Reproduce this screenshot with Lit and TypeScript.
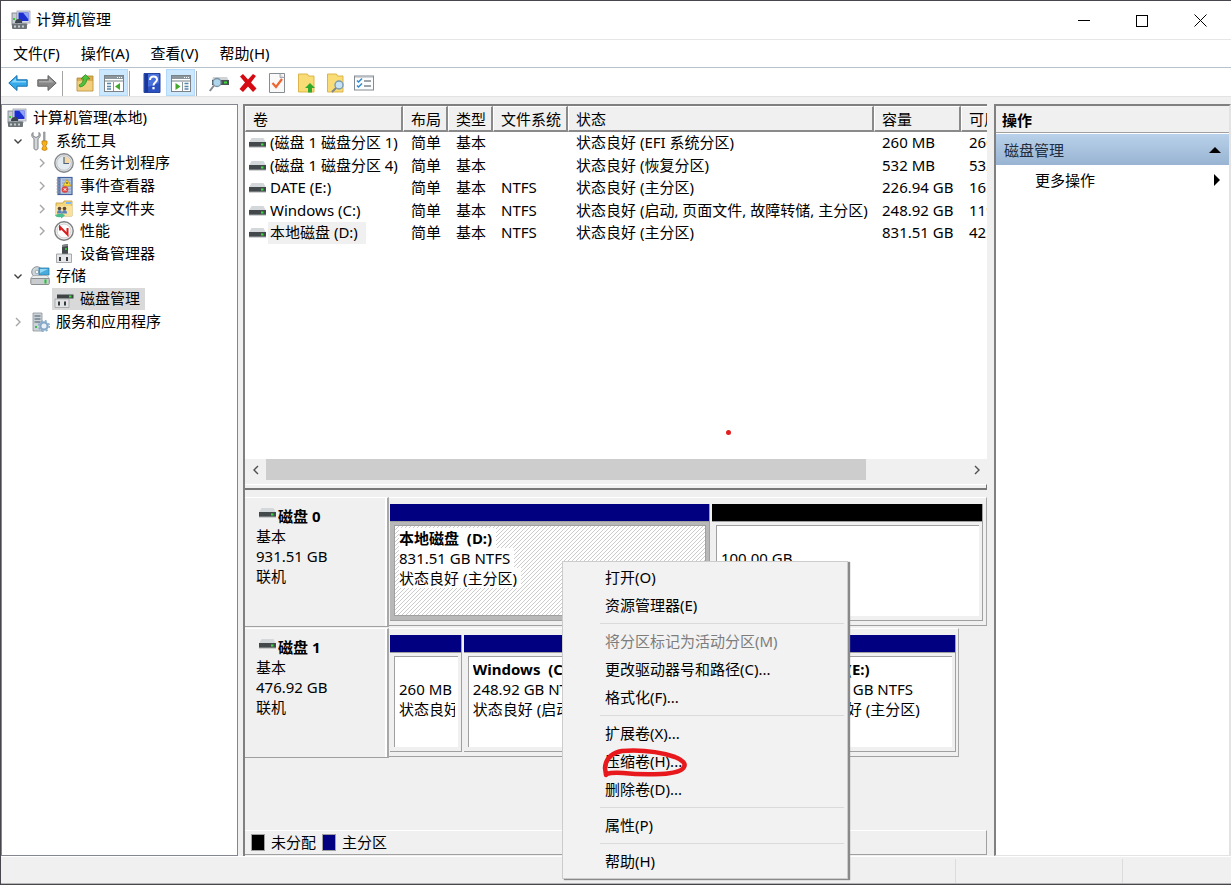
import { LitElement, html, css, svg, nothing, TemplateResult } from "lit";
import { customElement } from "lit/decorators.js";
import { classMap } from "lit/directives/class-map.js";
import { styleMap } from "lit/directives/style-map.js";

type Glyph = ReturnType<typeof svg>;

const computer = svg`
  <rect x="1" y="3" width="5" height="12" fill="#c9ccd2" stroke="#777c85" stroke-width=".8"/>
  <rect x="2" y="8" width="2" height="2" fill="#3ecb3a"/>
  <rect x="6" y="1" width="13" height="12" fill="#d8dce6" stroke="#a0a5b0" stroke-width=".8"/>
  <rect x="7.500" y="2.500" width="10" height="8.500" fill="#1b2fd0"/>
  <path d="M12 2.500h5.500v7z" fill="#8fa4f5"/>
  <path d="M4 13q0-4 4-4t3 4z" fill="#3c4450"/>
  <path d="M10 13h6l1 2h-7z" fill="#b9bcc4"/>
  <rect x="1" y="13.500" width="15" height="5.500" rx="1" fill="#6d7478"/>
  <path d="M3 15.500h2v2H3zM7 15.500h2v2H7zM11 15.500h2v2h-2z" fill="#c4ccd0"/>`;

const icons: Record<string, Glyph> = {
  computer,
  tools: svg`
    <path d="M3 1.500C1 3 1.500 6.500 4 7.500V17c0 2.500 4 2.500 4 0V7.500C10.500 6.500 11 3 9 1.500V5L6 6.500 3 5z" fill="#d4d7da" stroke="#7c8084" stroke-width="1"/>
    <path d="M13.500 1h1.600v9h-1.600z" fill="#a5a9ad" stroke="#777" stroke-width=".5"/>
    <path d="M12 10h5v3l-1 1v2l1 1v1.500q-2.500 2-5 0V17l1-1v-2l-1-1z" fill="#f5b21c" stroke="#c37f07" stroke-width=".8"/>`,
  clock: svg`
    <circle cx="10" cy="10" r="9.200" fill="#e9ebed" stroke="#85898c" stroke-width="1.400"/>
    <circle cx="10" cy="10" r="7.300" fill="#e4ebf1" stroke="#b4b7ba" stroke-width=".8"/>
    <path d="M10 10V3.500a6.500 6.500 0 0 1 6.500 6.500z" fill="#f4d9a4"/>
    <path d="M10 4v6.500h5" fill="none" stroke="#4e6384" stroke-width="1.200"/>`,
  events: svg`
    <rect x="4" y="1.500" width="14" height="17" fill="#b9c8e4" stroke="#42619d" stroke-width="1.200"/>
    <path d="M8 4h9M8 7h9M8 10h9M8 13h9M8 16h9" stroke="#7a92c2" stroke-width=".8"/>
    <path d="M5.500 2v16" stroke="#5b74a8" stroke-width="2"/>
    <path d="M2.500 4h4M2.500 7h4M2.500 10h4M2.500 13h4M2.500 16h4" stroke="#8a9099" stroke-width="1"/>
    <path d="M13 3.500l4 6.500H9z" fill="#f8d937" stroke="#b8930a" stroke-width=".7"/>
    <path d="M13 6v2" stroke="#333" stroke-width="1"/>
    <circle cx="11" cy="13.500" r="3.300" fill="#dc4541"/><path d="M9.700 12.200l2.600 2.600m0-2.600l-2.600 2.600" stroke="#fff"/>`,
  shared: svg`
    <path d="M2 4h7l1-2h8v15H2z" fill="#f4d77c" stroke="#c79b35" stroke-width=".8"/>
    <path d="M12 3h5v2h-5z" fill="#7fb8ea"/>
    <path d="M2 7h16v10H2z" fill="#f8e19a"/>
    <circle cx="5.500" cy="9.500" r="1.800" fill="#5d4632"/><circle cx="10.500" cy="9.500" r="1.800" fill="#5d4632"/>
    <path d="M3 14.500q0-3.500 2.500-3.500T8 14.500zM8 14.500q0-3.500 2.500-3.500t2.500 3.500z" fill="#5a82bd"/>
    <path d="M1 16.500q3-2.500 6-1.500v-1.500l4 3-4 3V18q-4 1-6-1.500z" fill="#49bf90"/>`,
  perf: svg`
    <circle cx="10" cy="10" r="9.200" fill="#f4f4f4" stroke="#7d7f81" stroke-width="1.400"/>
    <circle cx="10" cy="10" r="7" fill="#fff" stroke="#c3c3c3" stroke-width=".8"/>
    <path d="M6 9.500V6l7.500 7.500V7" fill="none" stroke="#d91f1f" stroke-width="2"/>`,
  devices: svg`
    <path d="M8 1l6-1v10H8z" fill="#454b4d"/><path d="M8 1l6-1v2l-6 1z" fill="#838a8c"/>
    <path d="M12 4v2" stroke="#30df37" stroke-width="1.500"/>
    <path d="M2.500 10h15v8.500h-15z" fill="#e4e6e8" stroke="#92969a" stroke-width=".8"/>
    <path d="M5 13h2v4H5zM12 13h2v4h-2z" fill="#363a3c"/>`,
  storage: svg`
    <circle cx="7" cy="6" r="5.300" fill="#ccd5d9" stroke="#8b959b"/><circle cx="7" cy="6" r="1.800" fill="#f2f5f6" stroke="#8b959b" stroke-width=".7"/>
    <path d="M9 2h10v7H9z" fill="#49abdc" stroke="#2a7dac" stroke-width=".8"/><path d="M10 3h8l-8 4z" fill="#95d8f5"/>
    <path d="M3 9.500h14l2.500 3H.500z" fill="#e9ebec" stroke="#9ba0a2" stroke-width=".7"/>
    <rect x=".800" y="12.500" width="18.500" height="6" rx="1" fill="#c9ccce" stroke="#898e90"/>
    <rect x="14.500" y="13.500" width="2" height="4" fill="#1fc32f"/>`,
  diskmgmt: svg`
    <path d="M6 2.500h11l2.500 3H3.500z" fill="#d6d9dc"/><path d="M3 5.500h16.500v4H3z" fill="#3e4345"/>
    <rect x="15" y="6.500" width="2.500" height="2" fill="#39df39"/>
    <path d="M1 10h14v8.500H1z" fill="#e2e3e5" stroke="#95989b" stroke-width=".7"/>
    <path d="M4 12.500h2v4H4zM10 12.500h2v4h-2z" fill="#35393b"/>`,
  services: svg`
    <path d="M3 1h9v18H3z" fill="#cbd2d8" stroke="#8a949c" stroke-width=".8"/>
    <path d="M4.500 4h6M4.500 7h6M4.500 10h6" stroke="#73818d" stroke-width="1.300"/>
    <rect x="5" y="14" width="2" height="2" fill="#3fba4b"/>
    <circle cx="14" cy="14" r="3.600" fill="#e9f0f6" stroke="#84a9c9" stroke-width="2.200"/>
    <circle cx="14" cy="14" r="5.300" fill="none" stroke="#84a9c9" stroke-width="1.400" stroke-dasharray="2.100 2.100"/>`,
  back: svg`<path d="M.800 10L9 2.500v4.300h10.200v6.400H9v4.300z" fill="#35a9ea" stroke="#1b70aa" stroke-width="1"/><path d="M3 9.500l5-4.500v3h10v1.500z" fill="#87d3fa"/>`,
  forward: svg`<path d="M19.200 10L11 2.500v4.300H.800v6.400H11v4.300z" fill="#878787" stroke="#646464" stroke-width="1"/><path d="M17 9.500L12 5v3H2v1.500z" fill="#ababab"/>`,
  up: svg`
    <path d="M2 5h5l1.500-2H18v15H2z" fill="#dcae51" stroke="#b08530" stroke-width=".8"/><path d="M2.500 8h15v9.500h-15z" fill="#f1cf7e"/>
    <path d="M4 12q4-1 4.500-6H6l4.500-4.500L15 6h-3Q11 13 5 14z" fill="#4dc33d" stroke="#25881f" stroke-width=".7"/>`,
  tree: svg`
    <rect x=".500" y="2.500" width="19" height="16" fill="#fff" stroke="#7b8389"/><path d="M1 3h18v3H1z" fill="#8c969d"/>
    <path d="M13 4.500h1M15 4.500h1M17 4.500h1" stroke="#fff"/><path d="M1 8h18" stroke="#a2abb1" stroke-width="1.500"/>
    <path d="M9.500 9v9" stroke="#8c969d"/><path d="M3 10.500h4M3 13.500h4M3 16h4" stroke="#5585a9" stroke-width="1.300"/>
    <path d="M16 10v7l-5-3.500z" fill="#41a92c"/>`,
  pane: svg`
    <rect x=".500" y="2.500" width="19" height="16" fill="#fff" stroke="#7b8389"/><path d="M1 3h18v3H1z" fill="#8c969d"/>
    <path d="M13 4.500h1M15 4.500h1M17 4.500h1" stroke="#fff"/><path d="M1 8h18" stroke="#a2abb1" stroke-width="1.500"/>
    <path d="M11.500 9v9" stroke="#8c969d"/><path d="M13.500 10.500h4M13.500 13.500h4M13.500 16h4" stroke="#5585a9" stroke-width="1.300"/>
    <path d="M4.500 10v7l5-3.500z" fill="#41a92c"/>`,
  help: svg`
    <path d="M2 .500h16v19H2z" fill="#2b50c0" stroke="#27459c"/><path d="M3 1h3v18H3z" fill="#1a3796"/><path d="M6 1h11v9L6 14z" fill="#4a70dc"/>
    <path d="M8 7q0-3.500 3.500-3.500T15 6.500c0 3-3.500 2.500-3.500 6" fill="none" stroke="#fff" stroke-width="2"/><rect x="10.400" y="14" width="2.200" height="2.300" fill="#fff"/>`,
  scan: svg`
    <path d="M4 4h14l1.500 3H3z" fill="#cfd3d6"/><path d="M3 7h17v5H3z" fill="#4c5255"/><rect x="15" y="8.500" width="3" height="2" fill="#3bdc3b"/>
    <circle cx="8" cy="9.500" r="4" fill="#aed7ee" stroke="#7d93a3" stroke-width="1.300"/><path d="M5 12.500L.800 18" stroke="#858b90" stroke-width="2"/>`,
  remove: svg`<path d="M2 3.500L5 1l5 5.500L15 1l3 2-5 6.500 5.500 6L15 19l-5-5.500L5 19l-3.500-3L7 9.500z" fill="#d60a12"/>`,
  check: svg`
    <path d="M2.500.500h15v19h-15z" fill="#f9f9fa" stroke="#888d92"/><path d="M13 .500v4h4.500" fill="#ddd" stroke="#888d92" stroke-width=".7"/>
    <path d="M5.500 10l3.500 4 6-8" fill="none" stroke="#ee6530" stroke-width="2.200"/>`,
  folderup: svg`
    <path d="M2.500 1h9l1 2H18v16H2.500z" fill="#f9dc76" stroke="#d7af3e" stroke-width=".9"/>
    <path d="M14 10l5 5h-3v4.500h-4V15H9z" fill="#2faa2d"/>`,
  folderfind: svg`
    <path d="M2.500 1h9l1 2H18v16H2.500z" fill="#f9dc76" stroke="#d7af3e" stroke-width=".9"/>
    <circle cx="14" cy="12" r="4" fill="#c8e4f4" stroke="#7b9bb1" stroke-width="1.400"/><path d="M11 15l-4 4" stroke="#80868b" stroke-width="2"/>`,
  list: svg`
    <rect x=".500" y="3" width="19" height="14" fill="#fbfcfd" stroke="#858b91"/><path d="M1 4h18" stroke="#a9b0b6"/>
    <path d="M3 7.500l1.500 1.500L8 5.500M3 12.500L4.500 14 8 10.500" fill="none" stroke="#2e8ad3" stroke-width="1.500"/>
    <path d="M10 8h7M10 13h7" stroke="#7d868d" stroke-width="1.400"/>`,
};

const icon = (name: string) => html`<svg class="icon" viewBox="0 0 20 20" aria-hidden="true">${icons[name]}</svg>`;

const drive = html`<svg class="drive" viewBox="0 0 17 10" aria-hidden="true">
  <path d="M2.500 0h12L17 4.500H0z" fill="#d5d8db"/><rect y="4" width="17" height="5" fill="#43484b"/>
  <rect y="8.500" width="17" height="1" fill="#a4a8ab"/><rect x="12" y="5.500" width="2.500" height="2" fill="#35e23b"/></svg>`;

const chevron = (d: string, color: string) => html`<svg class="chevron" viewBox="0 0 10 10" aria-hidden="true">
  <path d=${d} fill="none" stroke=${color} stroke-width="1.400"/></svg>`;
const RIGHT = "M3 1l4 4-4 4";
const DOWN = "M1.500 3.500L5 7l3.500-3.500";
const LEFT = "M7 1L3 5l4 4";

const shared = css`
  *, *::before, *::after { box-sizing: border-box; }
  button {
    font: inherit; color: inherit; border: 0; padding: 0; margin: 0;
    background: none; text-align: left; white-space: nowrap;
  }
  .icon { width: 20px; height: 20px; flex: none; display: block; }
  .drive { width: 17px; height: 10px; flex: none; display: block; }
  .chevron { width: 10px; height: 10px; display: block; }
`;

interface Node { label: string; icon: string; level: number; state?: "open" | "closed"; selected?: boolean }
const nodes: Node[] = [
  { label: "计算机管理(本地)", icon: "computer", level: 0 },
  { label: "系统工具", icon: "tools", level: 1, state: "open" },
  { label: "任务计划程序", icon: "clock", level: 2, state: "closed" },
  { label: "事件查看器", icon: "events", level: 2, state: "closed" },
  { label: "共享文件夹", icon: "shared", level: 2, state: "closed" },
  { label: "性能", icon: "perf", level: 2, state: "closed" },
  { label: "设备管理器", icon: "devices", level: 2 },
  { label: "存储", icon: "storage", level: 1, state: "open" },
  { label: "磁盘管理", icon: "diskmgmt", level: 2, selected: true },
  { label: "服务和应用程序", icon: "services", level: 1, state: "closed" },
];

@customElement("console-tree")
export class ConsoleTree extends LitElement {
  static styles = [shared, css`
    :host { display: block; background: #fff; border: 1px solid #828790; overflow: hidden; }
    .tree { list-style: none; margin: 0; padding: 2px 0 0 5px; height: 228px; display: grid; grid-auto-rows: 1fr; }
    .node { display: flex; align-items: center; min-height: 0; }
    .level2 { padding-left: 24px; }
    .toggle { width: 21px; height: 20px; display: flex; align-items: center; justify-content: center; flex: none; }
    .entry { display: flex; align-items: center; gap: 6px; height: 22px; padding: 0 5px 0 2px; }
    .level0 .entry { padding-left: 0; }
    .label { padding-bottom: 2px; }
    .selected { background: #d9d9d9; }
  `];
  render() {
    return html`<ul class="tree">${nodes.map((n) => html`
      <li class="node level${n.level}">
        ${n.level === 0 ? nothing : html`<span class="toggle">${n.state
          ? chevron(n.state === "open" ? DOWN : RIGHT, n.state === "open" ? "#404040" : "#a6a6a6") : nothing}</span>`}
        <button class=${classMap({ entry: true, selected: !!n.selected })}>${icon(n.icon)}<span class="label">${n.label}</span></button>
      </li>`)}</ul>`;
  }
}

const headers = ["卷", "布局", "类型", "文件系统", "状态", "容量", "可用空间"];
const volumes = [
  ["(磁盘 1 磁盘分区 1)", "简单", "基本", "", "状态良好 (EFI 系统分区)", "260 MB", "260 MB"],
  ["(磁盘 1 磁盘分区 4)", "简单", "基本", "", "状态良好 (恢复分区)", "532 MB", "532 MB"],
  ["DATE (E:)", "简单", "基本", "NTFS", "状态良好 (主分区)", "226.94 GB", "165.08 GB"],
  ["Windows (C:)", "简单", "基本", "NTFS", "状态良好 (启动, 页面文件, 故障转储, 主分区)", "248.92 GB", "119.36 GB"],
  ["本地磁盘 (D:)", "简单", "基本", "NTFS", "状态良好 (主分区)", "831.51 GB", "425.77 GB"],
];

@customElement("volume-list")
export class VolumeList extends LitElement {
  static styles = [shared, css`
    :host { display: flex; flex-direction: column; background: #fff; min-height: 0; overflow: hidden; }
    .view { flex: 1; overflow: hidden; }
    table { table-layout: fixed; width: 816px; border-collapse: separate; border-spacing: 0; }
    .c0 { width: 158px; } .c1 { width: 45px; } .c2 { width: 45px; } .c3 { width: 75px; }
    .c4 { width: 306px; } .c5 { width: 87px; } .c6 { width: 100px; }
    th {
      height: 26px; font-weight: 400; text-align: left; padding: 0 0 0 7px; background: #f0f0f0;
      border: 1px solid #fff; border-right: 2px solid #8a8a8a; border-bottom: 2px solid #8a8a8a;
    }
    td { height: 22px; padding: 0 0 2px 8px; white-space: nowrap; line-height: 20px; }
    tr:nth-child(even) td { height: 23px; }
    td:first-child { padding: 0 0 0 4px; }
    .name { display: flex; align-items: center; gap: 2px; }
    .text { padding: 0 8px 2px 2px; }
    .current { background: #f0f0f0; }
    .scroll { display: flex; height: 21px; background: #f0f0f0; }
    .arrow { width: 21px; display: flex; align-items: center; justify-content: center; }
    .track { flex: 1; display: flex; }
    .thumb { background: #cdcdcd; }
    .edge { height: 10px; background: #f0f0f0; border-bottom: 2px solid #767676; padding-top: 4px; }
    .lip { height: 4px; border-top: 1px solid #fff; border-right: 1px solid #767676; }
  `];
  render() {
    return html`
      <div class="view"><table>
        <colgroup>${headers.map((_, i) => html`<col class="c${i}">`)}</colgroup>
        <thead><tr>${headers.map((h) => html`<th scope="col">${h}</th>`)}</tr></thead>
        <tbody>${volumes.map((v, r) => html`<tr>${v.map((cell, i) => i === 0
          ? html`<td><div class="name">${drive}<span class=${classMap({ text: true, current: r === 4 })}>${cell}</span></div></td>`
          : html`<td>${cell}</td>`)}</tr>`)}</tbody>
      </table></div>
      <div class="scroll">
        <button class="arrow" aria-label="向左滚动">${chevron(LEFT, "#505050")}</button>
        <div class="track"><div class="thumb" style=${styleMap({ width: "85.7%" })}></div></div>
        <button class="arrow" aria-label="向右滚动">${chevron(RIGHT, "#505050")}</button>
      </div>
      <div class="edge"><div class="lip"></div></div>`;
  }
}

interface Part { name?: string; size: string; status?: string; weight: number; kind: "primary" | "free"; selected?: boolean }
interface Disk { name: string; size: string; extent: number; parts: Part[] }
const disks: Disk[] = [
  { name: "磁盘 0", size: "931.51 GB", extent: 100, parts: [
    { name: "本地磁盘  (D:)", size: "831.51 GB NTFS", status: "状态良好 (主分区)", weight: 320, kind: "primary", selected: true },
    { size: "100.00 GB", status: "未分配", weight: 271, kind: "free" },
  ] },
  { name: "磁盘 1", size: "476.92 GB", extent: 95.4, parts: [
    { size: "260 MB", status: "状态良好 (EFI 系统分区)", weight: 71, kind: "primary" },
    { name: "Windows  (C:)", size: "248.92 GB NTFS", status: "状态良好 (启动, 页面文件, 故障转储, 主分区)", weight: 247, kind: "primary" },
    { size: "532 MB", status: "状态良好 (恢复分区)", weight: 77, kind: "primary" },
    { name: "DATE  (E:)", size: "226.94 GB NTFS", status: "状态良好 (主分区)", weight: 162, kind: "primary" },
  ] },
];

@customElement("disk-map")
export class DiskMap extends LitElement {
  static styles = [shared, css`
    :host { display: flex; flex-direction: column; background: #f0f0f0; padding-top: 7px; }
    .disks { flex: 1; line-height: 20px; }
    .disk { display: flex; height: 131px; }
    .head {
      width: 144px; flex: none; height: 130px; padding: 8px 0 0 11px;
      border-top: 1px solid #fff; border-bottom: 1px solid #a0a0a0; border-right: 2px solid #a8a8a8;
      box-shadow: inset -2px 0 #fff;
    }
    .title { display: flex; gap: 2px; padding-left: 3px; font-weight: 700; }
    .title .drive { margin-top: 2px; }
    .map { flex: 1; min-width: 0; }
    .band {
      height: 129px; display: flex; gap: 2px; padding: 6px 3px 4px 1px;
      border-top: 1px solid #fff; border-right: 1px solid #a8a8a8; border-bottom: 1px solid #a0a0a0;
    }
    .part { min-width: 0; flex-basis: 0; display: flex; flex-direction: column; border-right: 1px solid #a0a0a0; border-bottom: 1px solid #a0a0a0; }
    .bar { height: 18px; border-bottom: 1px solid #a0a0a0; }
    .primary { background: #000080; }
    .free { background: #000; }
    .body { flex: 1; min-height: 0; padding: 3px 3px 4px 4px; }
    .selected { background: #b8b8b8; }
    .cell {
      height: 100%; background: #fff; overflow: hidden; padding: 2px 3px 0 4px;
      border-top: 1px solid #a0a0a0; border-left: 1px solid #a0a0a0;
    }
    .line { height: 20px; overflow: hidden; }
    .line span { background: #fff; display: inline-block; white-space: pre; padding-right: 4px; }
    .strong { font-weight: 700; }
    .selected .cell {
      background: linear-gradient(135deg, #fff 0 40%, #ccc 40% 60%, #fff 60%) 0 0 / 4px 4px;
      border: 1px solid #a0a0a0;
    }
    .legend {
      height: 25px; margin-bottom: 1px; display: flex; align-items: center; padding: 0 0 1px 6px; gap: 6px;
      border-top: 1px solid #fff; border-right: 1px solid #a0a0a0; border-bottom: 1px solid #a0a0a0;
    }
    .key { width: 14px; height: 17px; border: 1px solid #a0a0a0; }
  `];
  render() {
    return html`
      <div class="disks">${disks.map((d) => html`
        <section class="disk">
          <div class="head">
            <div class="title">${drive}<span>${d.name}</span></div>
            <div>基本</div><div>${d.size}</div><div>联机</div>
          </div>
          <div class="map"><div class="band" style=${styleMap({ width: d.extent + "%" })}>${d.parts.map((p) => html`
            <div class="part" style=${styleMap({ flexGrow: String(p.weight) })}>
              <div class="bar ${p.kind}"></div>
              <div class=${classMap({ body: true, selected: !!p.selected })}><div class="cell">
                <div class="line strong"><span>${p.name ?? ""}</span></div>
                <div class="line"><span>${p.size}</span></div>
                <div class="line"><span>${p.status}</span></div>
              </div></div>
            </div>`)}</div></div>
        </section>`)}</div>
      <div class="legend"><span class="key free"></span><span>未分配</span><span class="key primary"></span><span>主分区</span></div>`;
  }
}

type Item = { label: string; disabled?: boolean; marked?: boolean } | null;
const menu: Item[] = [
  { label: "打开(O)" }, { label: "资源管理器(E)" }, null,
  { label: "将分区标记为活动分区(M)", disabled: true }, { label: "更改驱动器号和路径(C)..." }, { label: "格式化(F)..." }, null,
  { label: "扩展卷(X)..." }, { label: "压缩卷(H)...", marked: true }, { label: "删除卷(D)..." }, null,
  { label: "属性(P)" }, null, { label: "帮助(H)" },
];

@customElement("context-menu")
export class ContextMenu extends LitElement {
  static styles = [shared, css`
    :host { display: block; box-sizing: border-box; width: 286px; background: #f2f2f2; border: 1px solid #ccc; padding: 2px; box-shadow: 2px 1px 1px #8a8a8a; }
    .item { display: block; position: relative; width: 100%; height: 28px; padding: 0 0 2px 40px; }
    .item:disabled { color: #7d7d7d; }
    .rule { height: 1px; margin: 3px 1px 4px 35px; background: #dadada; }
    .mark { position: absolute; left: 36px; top: 0; width: 88px; height: 32px; }
  `];
  render() {
    return html`${menu.map((m) => m ? html`<button class="item" ?disabled=${!!m.disabled}>${m.label}${m.marked ? html`
      <svg class="mark" viewBox="0 0 88 32" aria-hidden="true"><path d="M5 27L4 20Q5 6 21 3 50 1 74 9 86 14 83 19 80 25 60 26 40 27 22 25 12 24 5 26" fill="none" stroke="#e8191c" stroke-width="4.500" stroke-linecap="round" stroke-linejoin="round"/></svg>` : nothing}</button>`
      : html`<div class="rule"></div>`)}`;
  }
}

const tools: (string | null)[] = ["back", "forward", null, "up", "tree", null, "help", "pane", null, "scan", "remove", "check", "folderup", "folderfind", "list"];
const toolNames: Record<string, string> = {
  back: "后退", forward: "前进", up: "上移", tree: "显示控制台树", help: "帮助", pane: "显示操作窗格", scan: "重新扫描",
  remove: "删除", check: "属性", folderup: "打开", folderfind: "浏览", list: "设置",
};

@customElement("app-root")
export class AppRoot extends LitElement {
  static styles = [shared, css`
    :host {
      display: flex; flex-direction: column; position: relative; height: 100vh; overflow: hidden; box-sizing: border-box;
      background: #f0f0f0; color: #000; border: solid #47464c; border-width: 1px 0 1px 1px;
      font: 15px/20px "Noto Sans", "Noto Sans CJK SC", sans-serif;
    }
    .titlebar { height: 38px; background: #fff; display: flex; align-items: center; padding: 0 2px 0 10px; }
    .caption { flex: 1; padding: 0 0 2px 5px; }
    .window { width: 58px; height: 38px; display: flex; align-items: center; justify-content: center; }
    .window svg { width: 13px; height: 13px; }
    .menubar { height: 28px; background: #fff; border-top: 1px solid #e6e6e6; display: flex; align-items: center; padding: 0 0 2px 12px; gap: 21px; }
    .toolbar { height: 30px; background: #fff; border-top: 1px solid #b9c3cc; border-bottom: 1px solid #e3e3e3; display: flex; padding: 1px 0 0 2px; }
    .tool { width: 29px; height: 27px; display: flex; align-items: center; justify-content: center; }
    .on { background: #cce8ff; border: 1px solid #b3dafa; }
    .split { width: 1px; margin: 2px 7px 0 1px; background: #a5a5a5; }
    .panes { flex: 1; min-height: 0; display: grid; grid-template-columns: 237px 1fr 237px; gap: 5px; padding-top: 7px; }
    .centre { display: flex; flex-direction: column; min-width: 0; border-left: 2px solid #808080; border-top: 2px solid #808080; margin-right: 2px; }
    .volumes { flex: 1; }
    .map { flex: 0 0 366px; }
    .actions { background: #fff; border: solid #e3e3e3; border-width: 2px 2px 1px 2px; border-left-color: #808080; border-top-color: #808080; }
    .heading { height: 27px; padding: 4px 0 0 6px; font-weight: 700; background: #f0f0f0; border-bottom: 1px solid #a0a0a0; margin-bottom: 1px; }
    .group { width: 100%; height: 31px; padding: 0 8px; display: flex; align-items: center; justify-content: space-between; background: linear-gradient(#b9d1ea, #98b4d2); color: #1e2d40; }
    .more { width: 100%; height: 30px; padding: 0 9px 0 39px; display: flex; align-items: center; justify-content: space-between; }
    .up { border: 6px solid transparent; border-top: 0; border-bottom-color: #000; }
    .next { border: 6px solid transparent; border-right: 0; border-left-color: #000; }
    .status { height: 28px; border-top: 1px solid #fff; border-bottom: 1px solid #b4b4b4; display: grid; grid-template-columns: 1fr 167px 109px; padding-top: 2px; }
    .status div + div { border-left: 1px solid #dcdcdc; }
    .popup { position: absolute; left: 561px; top: 560px; }
    .dot { position: absolute; left: 725px; top: 429px; width: 5px; height: 5px; border-radius: 50%; background: #e02020; }
  `];
  private control(label: string, shape: Glyph): TemplateResult {
    return html`<button class="window" aria-label=${label}><svg viewBox="0 0 13 13" fill="none" stroke="#000">${shape}</svg></button>`;
  }
  render() {
    return html`
      <header class="titlebar">${icon("computer")}<span class="caption">计算机管理</span>
        ${this.control("最小化", svg`<path d="M0 6.500h12"/>`)}
        ${this.control("最大化", svg`<rect x=".500" y="1.500" width="11" height="11"/>`)}
        ${this.control("关闭", svg`<path d="M.500.500l12 12m0-12l-12 12"/>`)}
      </header>
      <nav class="menubar">${["文件(F)", "操作(A)", "查看(V)", "帮助(H)"].map((m) => html`<button>${m}</button>`)}</nav>
      <div class="toolbar">${tools.map((t) => t
        ? html`<button class=${classMap({ tool: true, on: t === "tree" || t === "pane" })} aria-label=${toolNames[t]}>${icon(t)}</button>`
        : html`<span class="split"></span>`)}</div>
      <main class="panes">
        <console-tree></console-tree>
        <div class="centre"><volume-list class="volumes"></volume-list><disk-map class="map"></disk-map></div>
        <aside class="actions">
          <div class="heading">操作</div>
          <button class="group">磁盘管理<span class="up"></span></button>
          <button class="more">更多操作<span class="next"></span></button>
        </aside>
      </main>
      <footer class="status"><div></div><div></div><div></div></footer>
      <span class="dot"></span>
      <context-menu class="popup"></context-menu>`;
  }
}
